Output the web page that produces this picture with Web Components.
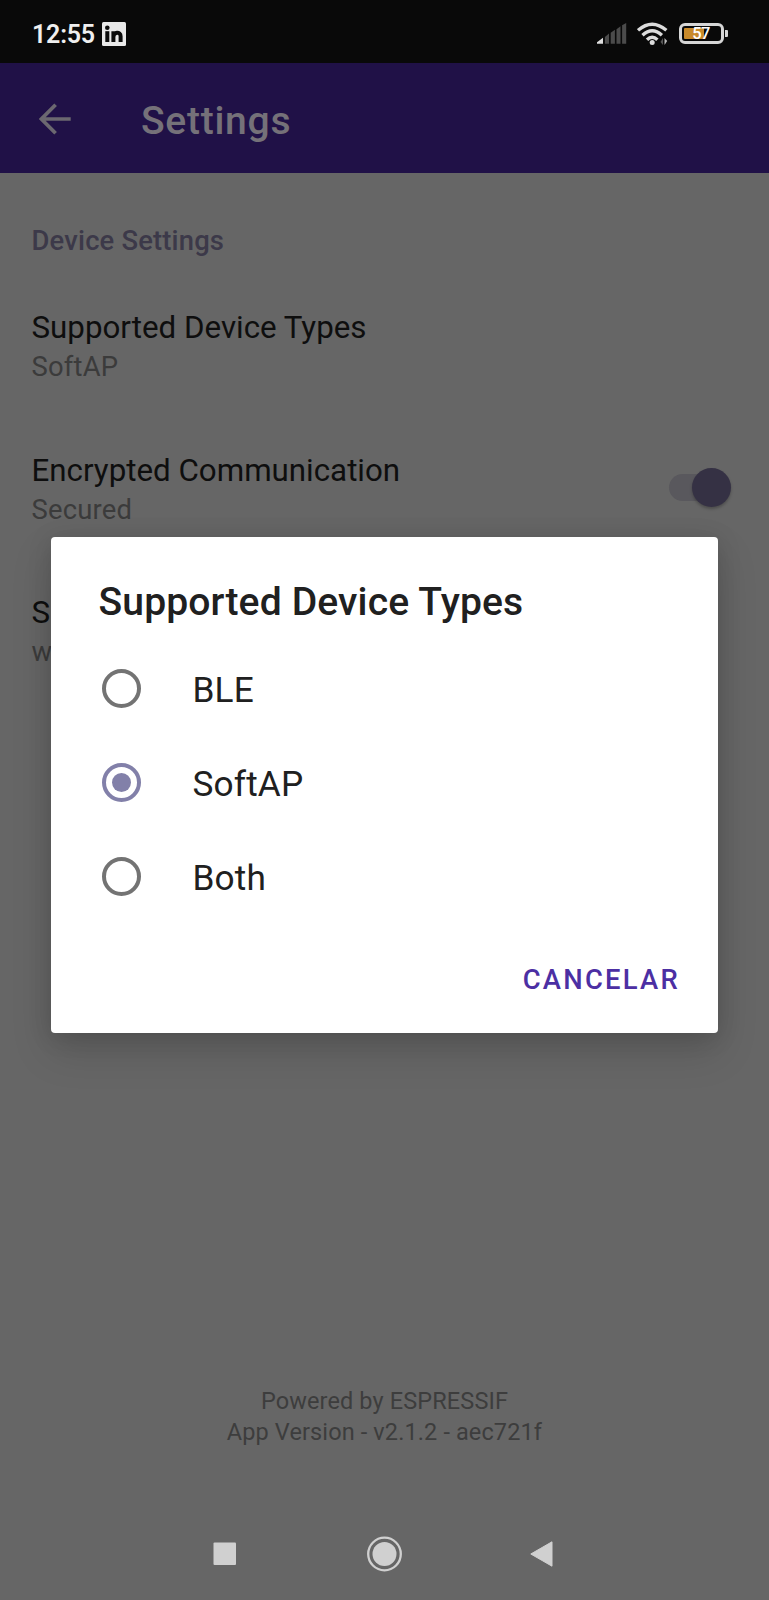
<!DOCTYPE html>
<html lang="en">
<head>
<meta charset="utf-8">
<meta name="viewport" content="width=device-width">
<title>Settings</title>
<style>
html,body{margin:0;padding:0;background:#666}
body{font-family:Roboto,"Noto Sans",sans-serif}
</style>
</head>
<body>
<settings-screen></settings-screen>
<script>
const define = (name, html) => customElements.define(name, class extends HTMLElement {
  constructor() {
    super();
    const t = document.createElement('template');
    t.innerHTML = html;
    this.attachShadow({ mode: 'open' }).appendChild(t.content.cloneNode(true));
  }
});

define('status-bar', `
<style>
:host{display:flex;box-sizing:border-box;height:63px;padding:4px 41.5px 0 32px;background:#090909;align-items:center}
.time{font-size:25px;font-weight:600;line-height:30px;color:#efefef;width:69.5px;padding-top:2px;letter-spacing:-.2px;white-space:nowrap}
.gap{flex:1}
svg{display:block;flex:none}
.sig{margin-right:10.5px}.wifi{margin-right:10.5px}
.bat{display:flex;align-items:center}
.cell{position:relative;box-sizing:border-box;width:45px;height:21px;border:3px solid #d6d6d6;border-radius:6px;padding:2px;display:flex}
.fill{width:20px;background:#c98a2a;border-radius:1px 0 0 1px}
.pct{position:absolute;inset:0;text-align:center;font-size:16.5px;font-weight:500;line-height:16px;letter-spacing:-.6px;color:#fff;padding-right:1px}
.tip{width:2.6px;height:7px;background:#d6d6d6;margin-left:1px;border-radius:0 1px 1px 0}
</style>
<span class="time">12:55</span>
<svg width="24" height="24" viewBox="0 0 24 24"><rect width="24" height="24" rx="1.5" fill="#e9e9e9"/><g fill="#0c0c0c"><circle cx="5.3" cy="5.8" r="2.3"/><rect x="3.3" y="9.2" width="4" height="10.8"/></g><path d="M11.4 9.2V20M11.4 15C11.4 9.6 18.6 9.2 18.6 14.3V20" fill="none" stroke="#0c0c0c" stroke-width="4"/></svg>
<div class="gap"></div>
<svg class="sig" width="30" height="22" viewBox="0 0 30 22"><path d="M0 20.8V19.3L6 14.8V20.8Z" fill="#dedede"/><path d="M7.9 14 12 10.4V20.8H7.9ZM13.7 9.8 17.9 6.8V20.8H13.7ZM19.5 6.2 23.5 3.2V20.8H19.5ZM25.1 2.2 29.2 0V20.8H25.1Z" fill="#4b4b4b"/></svg>
<svg class="wifi" width="31" height="24" viewBox="0 0 31 24"><g fill="none" stroke="#dcdcdc" stroke-width="3.4"><path d="M1 8.3Q15.2-3.8 29.4 8.3"/><path d="M5.5 13.2Q15.2 4.5 24.9 13.2"/><path d="M10 17.7Q15.2 12.7 20.4 17.7"/></g><circle cx="15.2" cy="20.6" r="2.5" fill="#dcdcdc"/><path d="M26 16V23L23.5 20Z" fill="#555"/><path d="M27.5 16V23L30.2 19Z" fill="#bbb"/></svg>
<div class="bat"><div class="cell"><div class="fill"></div><span class="pct">57</span></div><div class="tip"></div></div>`);

define('app-bar', `
<style>
:host{display:flex;box-sizing:border-box;height:110px;padding:0 0 0 39px;background:#201147;align-items:center}
svg{display:block;margin:1px 70px 0 0}
h1{margin:6px 0 0;font-size:39.1px;font-weight:500;line-height:46px;color:#757179;letter-spacing:.7px}
</style>
<svg width="32" height="32" viewBox="0 0 32 32"><path d="M31.7 16H3.5M16.6 1.7 2.4 16 16.6 30.3" fill="none" stroke="#6b6870" stroke-width="3.7"/></svg>
<h1><slot></slot></h1>`);

define('section-title', `
<style>:host{display:block;padding:49px 31.5px 15px;font-size:27.4px;line-height:38px;font-weight:500;letter-spacing:.17px;color:#3c3949}</style><slot></slot>`);

define('setting-item', `
<style>
:host{display:flex;box-sizing:border-box;height:142.5px;padding:32px 38px 0 31.5px}
.text{flex:1}
.title{font-size:31.3px;line-height:41px;color:#0e0e0e;white-space:nowrap}
.sub{font-size:27.4px;line-height:39.5px;color:#3b3b3b;letter-spacing:.2px}
</style>
<div class="text"><div class="title"><slot></slot></div><div class="sub"><slot name="summary"></slot></div></div>
<slot name="control"></slot>`);

define('toggle-switch', `
<style>
:host{display:block;position:relative;width:62px;height:39px;margin-top:18px}
.track{box-sizing:border-box;width:56px;height:27px;border-radius:14px;background:#59585d;margin:0;transform:translateY(6px)}
.thumb{position:absolute;right:0;top:0;width:39px;height:39px;border-radius:50%;background:#353144;box-shadow:0 2px 3px rgba(0,0,0,.25)}
</style><div class="track"></div><div class="thumb"></div>`);

define('app-footer', `
<style>:host{display:block;text-align:center;font-size:23.5px;line-height:31.6px;letter-spacing:.12px;color:#3d3d3d}</style><slot></slot>`);

define('nav-bar', `
<style>
:host{display:flex;box-sizing:border-box;height:92px;padding:0 216px 0 213px;align-items:center;justify-content:space-between}
svg{display:block}
</style>
<svg width="24" height="24"><rect x=".5" y=".5" width="22.5" height="22.5" rx="1" fill="#d0d0d0"/></svg>
<svg width="36" height="36" viewBox="0 0 36 36"><circle cx="18.5" cy="18" r="16.3" fill="none" stroke="#d0d0d0" stroke-width="2.3"/><circle cx="18.5" cy="18" r="12" fill="#d0d0d0"/></svg>
<svg width="23" height="26" viewBox="0 0 23 26"><path d="M.8 13 22 .8V25.2Z" fill="#d0d0d0" stroke="#d0d0d0" stroke-linejoin="round"/></svg>`);

define('radio-option', `
<style>
:host{display:flex;height:94px;align-items:center;font-size:35.2px;line-height:42px;color:#202020;letter-spacing:.15px}
.ring{box-sizing:border-box;width:39px;height:39px;border:4px solid #737373;border-radius:50%;margin-right:51.5px;display:flex;align-items:center;justify-content:center}
.dot{display:none;width:19px;height:19px;border-radius:50%;background:#8280a9}
:host([checked]) .ring{border-color:#8280a9}
:host([checked]) .dot{display:block}
.label{margin-top:3px}
</style><div class="ring"><div class="dot"></div></div><span class="label"><slot></slot></span>`);

define('choice-dialog', `
<style>
:host{display:flex;flex-direction:column;box-sizing:border-box;width:667px;height:495.5px;padding:42px 38px 0 51px;background:#fff;border-radius:4px;box-shadow:0 18px 40px rgba(0,0,0,.15),0 3px 24px rgba(0,0,0,.13)}
h2{margin:0 0 16px -3.5px;font-size:39.1px;font-weight:500;line-height:46px;color:#202020;white-space:nowrap;letter-spacing:.12px}
.action{align-self:flex-end;margin-top:40px;font-size:27.4px;font-weight:500;line-height:34px;letter-spacing:2.25px;color:#4c2fa3}
</style>
<h2><slot name="title"></slot></h2><slot></slot><div class="action"><slot name="action"></slot></div>`);

define('settings-screen', `
<style>
:host{display:flex;flex-direction:column;position:relative;width:769px;height:1600px;background:#666;overflow:hidden}
.space{flex:1}
app-footer{margin-bottom:59px}
choice-dialog{position:absolute;left:51px;top:537px}
</style>
<status-bar></status-bar>
<app-bar>Settings</app-bar>
<section-title>Device Settings</section-title>
<setting-item>Supported Device Types<span slot="summary">SoftAP</span></setting-item>
<setting-item>Encrypted Communication<span slot="summary">Secured</span><toggle-switch slot="control"></toggle-switch></setting-item>
<setting-item>S<span slot="summary">w</span></setting-item>
<div class="space"></div>
<app-footer>Powered by ESPRESSIF<br>App Version - v2.1.2 - aec721f</app-footer>
<nav-bar></nav-bar>
<choice-dialog>
<span slot="title">Supported Device Types</span>
<radio-option>BLE</radio-option>
<radio-option checked>SoftAP</radio-option>
<radio-option>Both</radio-option>
<span slot="action">CANCELAR</span>
</choice-dialog>`);
</script>
</body>
</html>
